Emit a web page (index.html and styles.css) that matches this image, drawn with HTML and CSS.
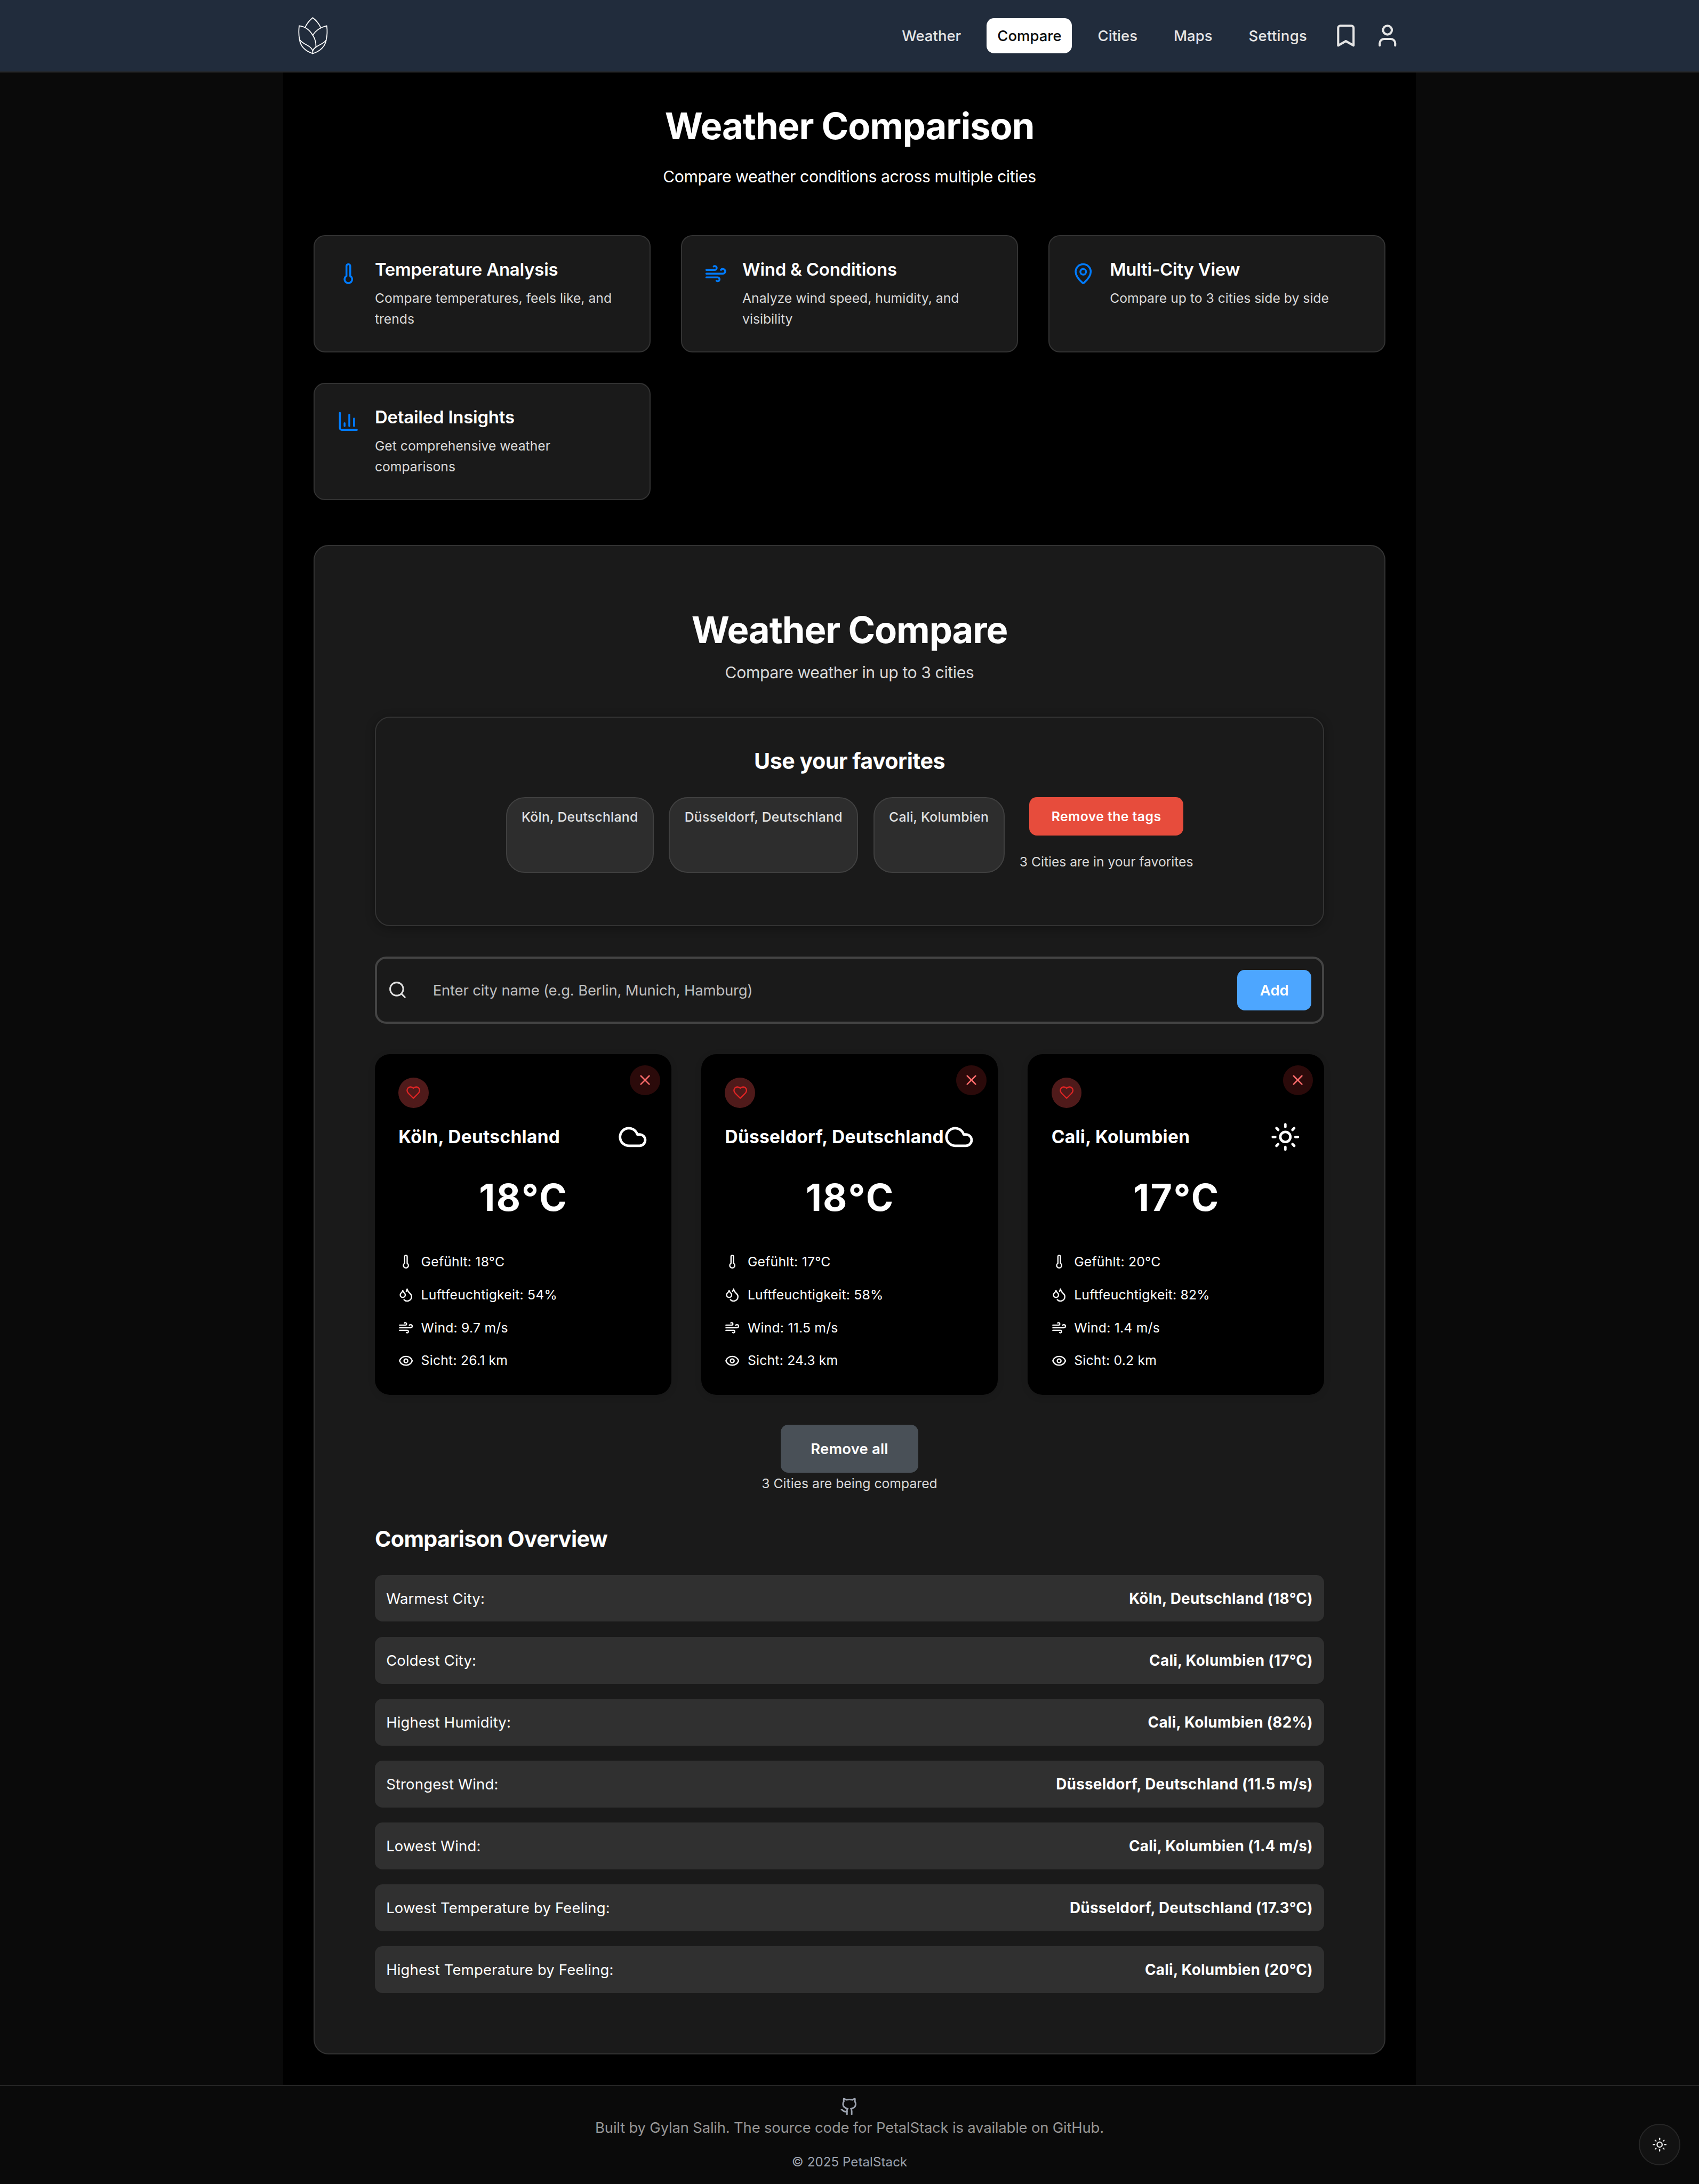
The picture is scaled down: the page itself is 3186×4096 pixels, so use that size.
FILE: index.html
```html
<!DOCTYPE html>
<html lang="en">
<head>
<meta charset="utf-8">
<title>PetalStack – Weather Comparison</title>
<link rel="stylesheet" href="styles.css">
</head>
<body>
<svg class="sprite" aria-hidden="true">
  <symbol id="thermometer" viewBox="0 0 24 24"><path d="M14 4v10.54a4 4 0 1 1-4 0V4a2 2 0 0 1 4 0Z"/></symbol>
  <symbol id="wind" viewBox="0 0 24 24"><path d="M12.8 19.6A2 2 0 1 0 14 16H2"/><path d="M17.5 8a2.5 2.5 0 1 1 2 4H2"/><path d="M9.8 4.4A2 2 0 1 1 11 8H2"/></symbol>
  <symbol id="pin" viewBox="0 0 24 24"><path d="M20 10c0 4.993-5.539 10.193-7.399 11.799a1 1 0 0 1-1.202 0C9.539 20.193 4 14.993 4 10a8 8 0 0 1 16 0"/><circle cx="12" cy="10" r="3"/></symbol>
  <symbol id="chart" viewBox="0 0 24 24"><path d="M3 3v16a2 2 0 0 0 2 2h16"/><path d="M18 17V9"/><path d="M13 17V5"/><path d="M8 17v-3"/></symbol>
  <symbol id="bookmark" viewBox="0 0 24 24"><path d="m19 21-7-4-7 4V5a2 2 0 0 1 2-2h10a2 2 0 0 1 2 2v16z"/></symbol>
  <symbol id="user" viewBox="0 0 24 24"><path d="M19 21v-2a4 4 0 0 0-4-4H9a4 4 0 0 0-4 4v2"/><circle cx="12" cy="7" r="4"/></symbol>
  <symbol id="search" viewBox="0 0 24 24"><circle cx="11" cy="11" r="8"/><path d="m21 21-4.3-4.3"/></symbol>
  <symbol id="heart" viewBox="0 0 24 24"><path d="M19 14c1.49-1.46 3-3.21 3-5.5A5.5 5.5 0 0 0 16.5 3c-1.76 0-3 .5-4.5 2-1.5-1.5-2.74-2-4.5-2A5.5 5.5 0 0 0 2 8.5c0 2.3 1.5 4.05 3 5.5l7 7Z"/></symbol>
  <symbol id="close" viewBox="0 0 24 24"><path d="M18 6 6 18"/><path d="m6 6 12 12"/></symbol>
  <symbol id="cloud" viewBox="0 0 24 24"><path d="M17.5 19H9a7 7 0 1 1 6.71-9h1.79a4.5 4.5 0 1 1 0 9Z"/></symbol>
  <symbol id="sun" viewBox="0 0 24 24"><circle cx="12" cy="12" r="4"/><path d="M12 2v2"/><path d="M12 20v2"/><path d="m4.93 4.93 1.41 1.41"/><path d="m17.66 17.66 1.41 1.41"/><path d="M2 12h2"/><path d="M20 12h2"/><path d="m6.34 17.66-1.41 1.41"/><path d="m19.07 4.93-1.41 1.41"/></symbol>
  <symbol id="droplets" viewBox="0 0 24 24"><path d="M7 16.3c2.2 0 4-1.83 4-4.05 0-1.16-.57-2.26-1.71-3.19S7.29 6.75 7 5.3c-.29 1.45-1.14 2.84-2.29 3.76S3 11.1 3 12.25c0 2.22 1.8 4.05 4 4.05z"/><path d="M12.56 6.6A10.97 10.97 0 0 0 14 3.02c.5 2.5 2 4.9 4 6.5s3 3.5 3 5.5a6.98 6.98 0 0 1-11.91 4.97"/></symbol>
  <symbol id="eye" viewBox="0 0 24 24"><path d="M2.062 12.348a1 1 0 0 1 0-.696 10.75 10.75 0 0 1 19.876 0 1 1 0 0 1 0 .696 10.75 10.75 0 0 1-19.876 0"/><circle cx="12" cy="12" r="3"/></symbol>
  <symbol id="github" viewBox="0 0 24 24"><path d="M15 22v-4a4.8 4.8 0 0 0-1-3.5c3 0 6-2 6-5.5.08-1.25-.27-2.48-1-3.5.28-1.15.28-2.35 0-3.5 0 0-1 0-3 1.5-2.64-.5-5.36-.5-8 0C6 2 5 2 5 2c-.3 1.15-.3 2.35 0 3.5A5.403 5.403 0 0 0 4 9c0 3.5 3 5.5 6 5.5-.39.49-.68 1.05-.85 1.65-.17.6-.22 1.23-.15 1.85v4"/><path d="M9 18c-4.51 2-5-2-7-2"/></symbol>
</svg>

<header class="header">
  <div class="header-inner">
    <svg class="logo" viewBox="48 36 192 252">
      <path d="M93 108Q107 75 141 47Q175 73 191 108"/>
      <path d="M57 185Q49 145 55 98Q110 105 141 158Q164 193 161 234"/>
      <path d="M141 158Q170 112 230 98Q237 147 226 190"/>
      <path d="M57 185C62 227 92 258 141 275C190 260 221 227 226 190"/>
      <path d="M57 185C78 219 132 222 141 258C151 226 205 219 226 190"/>
      <path d="M141 258V275"/>
    </svg>
    <nav class="nav">
      <a class="nav-link">Weather</a>
      <a class="nav-link active">Compare</a>
      <a class="nav-link">Cities</a>
      <a class="nav-link">Maps</a>
      <a class="nav-link">Settings</a>
      <svg class="icon nav-icon"><use href="#bookmark"/></svg>
      <svg class="icon nav-icon"><use href="#user"/></svg>
    </nav>
  </div>
</header>

<main class="main">
  <h1 class="title">Weather Comparison</h1>
  <p class="subtitle page-subtitle">Compare weather conditions across multiple cities</p>

  <section class="features">
    <article class="feature">
      <svg class="icon feature-icon"><use href="#thermometer"/></svg>
      <div><h3 class="feature-title">Temperature Analysis</h3><p class="feature-text">Compare temperatures, feels like, and trends</p></div>
    </article>
    <article class="feature">
      <svg class="icon feature-icon"><use href="#wind"/></svg>
      <div><h3 class="feature-title">Wind &amp; Conditions</h3><p class="feature-text">Analyze wind speed, humidity, and visibility</p></div>
    </article>
    <article class="feature">
      <svg class="icon feature-icon"><use href="#pin"/></svg>
      <div><h3 class="feature-title">Multi-City View</h3><p class="feature-text">Compare up to 3 cities side by side</p></div>
    </article>
    <article class="feature">
      <svg class="icon feature-icon"><use href="#chart"/></svg>
      <div><h3 class="feature-title">Detailed Insights</h3><p class="feature-text">Get comprehensive weather comparisons</p></div>
    </article>
  </section>

  <section class="panel">
    <h2 class="title">Weather Compare</h2>
    <p class="subtitle panel-subtitle">Compare weather in up to 3 cities</p>

    <div class="favorites">
      <h3 class="favorites-title">Use your favorites</h3>
      <div class="tags">
        <span class="tag">Köln, Deutschland</span>
        <span class="tag">Düsseldorf, Deutschland</span>
        <span class="tag">Cali, Kolumbien</span>
        <div class="tags-side">
          <button class="btn btn-danger">Remove the tags</button>
          <p class="note">3 Cities are in your favorites</p>
        </div>
      </div>
    </div>

    <div class="search">
      <svg class="icon search-icon"><use href="#search"/></svg>
      <span class="placeholder">Enter city name (e.g. Berlin, Munich, Hamburg)</span>
      <button class="btn btn-add">Add</button>
    </div>

    <div class="cities">
      <article class="city">
        <button class="round close"><svg class="icon"><use href="#close"/></svg></button>
        <button class="round heart"><svg class="icon"><use href="#heart"/></svg></button>
        <div class="city-head"><h3 class="city-name">Köln, Deutschland</h3><svg class="icon city-icon"><use href="#cloud"/></svg></div>
        <div class="temp">18°C</div>
        <ul class="details">
          <li><svg class="icon"><use href="#thermometer"/></svg>Gefühlt: 18°C</li>
          <li><svg class="icon"><use href="#droplets"/></svg>Luftfeuchtigkeit: 54%</li>
          <li><svg class="icon"><use href="#wind"/></svg>Wind: 9.7 m/s</li>
          <li><svg class="icon"><use href="#eye"/></svg>Sicht: 26.1 km</li>
        </ul>
      </article>
      <article class="city">
        <button class="round close"><svg class="icon"><use href="#close"/></svg></button>
        <button class="round heart"><svg class="icon"><use href="#heart"/></svg></button>
        <div class="city-head"><h3 class="city-name">Düsseldorf, Deutschland</h3><svg class="icon city-icon"><use href="#cloud"/></svg></div>
        <div class="temp">18°C</div>
        <ul class="details">
          <li><svg class="icon"><use href="#thermometer"/></svg>Gefühlt: 17°C</li>
          <li><svg class="icon"><use href="#droplets"/></svg>Luftfeuchtigkeit: 58%</li>
          <li><svg class="icon"><use href="#wind"/></svg>Wind: 11.5 m/s</li>
          <li><svg class="icon"><use href="#eye"/></svg>Sicht: 24.3 km</li>
        </ul>
      </article>
      <article class="city">
        <button class="round close"><svg class="icon"><use href="#close"/></svg></button>
        <button class="round heart"><svg class="icon"><use href="#heart"/></svg></button>
        <div class="city-head"><h3 class="city-name">Cali, Kolumbien</h3><svg class="icon city-icon"><use href="#sun"/></svg></div>
        <div class="temp">17°C</div>
        <ul class="details">
          <li><svg class="icon"><use href="#thermometer"/></svg>Gefühlt: 20°C</li>
          <li><svg class="icon"><use href="#droplets"/></svg>Luftfeuchtigkeit: 82%</li>
          <li><svg class="icon"><use href="#wind"/></svg>Wind: 1.4 m/s</li>
          <li><svg class="icon"><use href="#eye"/></svg>Sicht: 0.2 km</li>
        </ul>
      </article>
    </div>

    <div class="actions">
      <button class="btn btn-clear">Remove all</button>
      <p class="note">3 Cities are being compared</p>
    </div>

    <h3 class="overview-title">Comparison Overview</h3>
    <dl class="overview">
      <div class="row"><dt>Warmest City:</dt><dd>Köln, Deutschland (18°C)</dd></div>
      <div class="row"><dt>Coldest City:</dt><dd>Cali, Kolumbien (17°C)</dd></div>
      <div class="row"><dt>Highest Humidity:</dt><dd>Cali, Kolumbien (82%)</dd></div>
      <div class="row"><dt>Strongest Wind:</dt><dd>Düsseldorf, Deutschland (11.5 m/s)</dd></div>
      <div class="row"><dt>Lowest Wind:</dt><dd>Cali, Kolumbien (1.4 m/s)</dd></div>
      <div class="row"><dt>Lowest Temperature by Feeling:</dt><dd>Düsseldorf, Deutschland (17.3°C)</dd></div>
      <div class="row"><dt>Highest Temperature by Feeling:</dt><dd>Cali, Kolumbien (20°C)</dd></div>
    </dl>
  </section>
</main>

<footer class="footer">
  <svg class="icon footer-icon"><use href="#github"/></svg>
  <p class="credit">Built by Gylan Salih. The source code for PetalStack is available on GitHub.</p>
  <p class="copyright">© 2025 PetalStack</p>
</footer>

<button class="round theme-toggle"><svg class="icon"><use href="#sun"/></svg></button>
</body>
</html>
```
FILE: styles.css
```css
html {
  font-size: 28.32px;
}

* {
  box-sizing: border-box;
  margin: 0;
  padding: 0;
}

body {
  display: flex;
  flex-direction: column;
  min-height: 100vh;
  overflow: hidden;
  background: #0a0a0a;
  color: #fff;
  font-family: Inter, "Liberation Sans", sans-serif;
  font-size: .97rem;
}

ul, dl {
  list-style: none;
}

button {
  border: 0;
  color: inherit;
  font: inherit;
}

.sprite {
  position: absolute;
  width: 0;
  height: 0;
}

.icon {
  display: block;
  flex: none;
  width: 1rem;
  height: 1rem;
  fill: none;
  stroke: currentColor;
  stroke-width: 2;
  stroke-linecap: round;
  stroke-linejoin: round;
}

/* Header */
.header {
  height: 4.8125rem;
  background: #212c3c;
  border-bottom: 2px solid #262626;
}

.header-inner {
  display: flex;
  align-items: center;
  justify-content: space-between;
  width: 75rem;
  height: 100%;
  margin: 0 auto;
  padding: 0 1rem;
}

.logo {
  width: 2rem;
  height: 2.625rem;
  fill: none;
  stroke: #fff;
  stroke-width: 6;
  stroke-linecap: round;
  stroke-linejoin: round;
}

.nav {
  display: flex;
  align-items: center;
  gap: 1rem;
  color: #e5e5e5;
}

.nav-link {
  display: flex;
  align-items: center;
  height: 2.3125rem;
  padding: 0 .7rem;
  border-radius: .5rem;
  font-weight: 500;
  letter-spacing: .001em;
}

.nav-link:last-of-type {
  letter-spacing: .012em;
}

.nav-link.active {
  background: #fff;
  color: #0a0a0a;
}

.nav-icon {
  width: 1.75rem;
  height: 1.75rem;
}

/* Page */
.main {
  width: 75rem;
  margin: 0 auto;
  padding: 2rem;
  background: #000;
}

.title {
  font-size: 2.425rem;
  font-weight: 700;
  line-height: 3.1rem;
  letter-spacing: -.0158em;
  text-align: center;
}

.subtitle {
  font-size: 1.067rem;
  line-height: 1.76rem;
  letter-spacing: -.014em;
  text-align: center;
}

.page-subtitle {
  margin: .93rem 0 2.96rem;
}

.features {
  display: grid;
  grid-template-columns: repeat(3, 1fr);
  gap: 2rem;
  margin-bottom: 2.98rem;
}

.feature {
  display: flex;
  gap: 1rem;
  height: 7.78rem;
  padding: 1.5rem;
  background: #1a1a1a;
  border: 2px solid #333;
  border-radius: .75rem;
}

.feature-icon {
  width: 1.5rem;
  height: 1.5rem;
  margin-top: .25rem;
  color: #007bff;
}

.feature-title {
  margin-bottom: .47rem;
  font-size: 1.164rem;
  font-weight: 600;
  line-height: 1.47rem;
  letter-spacing: -.007em;
}

.feature-text {
  color: #d9d9d9;
  font-size: .873rem;
  line-height: 1.36rem;
}

.panel {
  padding: 4rem;
  background: #1a1a1a;
  border: 2px solid #333;
  border-radius: 1rem;
}

.panel-subtitle {
  margin: .41rem 0 2rem;
  color: #d9d9d9;
}

.note {
  color: #d9d9d9;
  font-size: .873rem;
  line-height: 1.44rem;
  white-space: nowrap;
}

.btn {
  border-radius: .5rem;
  font-weight: 600;
}

/* Favorites */
.favorites {
  margin-bottom: 2rem;
  padding: 1.5rem 1.5rem 3.49rem;
  border: 2px solid #333;
  border-radius: 1rem;
  box-shadow: 0 .125rem .625rem rgba(0, 0, 0, .3);
}

.favorites-title {
  margin-bottom: .98rem;
  font-size: 1.455rem;
  font-weight: 700;
  line-height: 2.8rem;
  letter-spacing: -.013em;
  text-align: center;
}

.tags {
  display: flex;
  justify-content: center;
  gap: 1rem;
  height: 5rem;
}

.tag {
  padding: .52rem .97rem 0;
  background: #2d2d2d;
  border: 2px solid #404040;
  border-radius: 1.25rem;
  color: #e0e0e0;
  font-size: .873rem;
  font-weight: 500;
  line-height: 1.44rem;
  letter-spacing: .01em;
}

.tags-side {
  display: flex;
  flex-direction: column;
  align-items: center;
  gap: 1.03rem;
}

.tags-side .note {
  letter-spacing: -.002em;
}

.btn-danger {
  width: 10.19rem;
  height: 2.5625rem;
  background: #e74c3c;
  font-size: .873rem;
  letter-spacing: .0178em;
}

/* Search */
.search {
  display: flex;
  align-items: center;
  height: 4.4375rem;
  margin-bottom: 2.01rem;
  padding: 0 .7rem;
  border: 4px solid #444;
  border-radius: .75rem;
}

.search-icon {
  width: 1.3rem;
  height: 1.3rem;
  color: #e0e0e0;
}

.placeholder {
  flex: 1;
  margin-left: 1.7rem;
  color: #bfbfbf;
  letter-spacing: -.006em;
}

.btn-add {
  width: 4.91rem;
  height: 2.675rem;
  background: #4da6ff;
}

/* City cards */
.cities {
  display: grid;
  grid-template-columns: repeat(3, 1fr);
  gap: 2rem;
  margin-bottom: 2rem;
}

.city {
  position: relative;
  height: 22.56rem;
  padding: 1.5625rem;
  background: #000;
  border-radius: 1rem;
  box-shadow: 0 .125rem .5rem rgba(0, 0, 0, .1);
}

.round {
  display: flex;
  align-items: center;
  justify-content: center;
  width: 2rem;
  height: 2rem;
  border-radius: 50%;
}

.heart {
  background: #4f1a1a;
  color: #e02424;
}

.close {
  position: absolute;
  top: .74rem;
  right: .74rem;
  background: #2b0a0a;
  color: #ff6b6b;
}

.close .icon {
  width: 1.1rem;
  height: 1.1rem;
}

.city-head {
  display: flex;
  align-items: center;
  justify-content: space-between;
  height: 2rem;
  margin-top: .94rem;
}

.city-name {
  font-size: 1.182rem;
  font-weight: 700;
  letter-spacing: .009em;
  white-space: nowrap;
}

.city-icon {
  width: 2rem;
  height: 2rem;
}

.temp {
  margin: 1.79rem 0 2.24rem;
  padding-left: .08rem;
  font-size: 2.46rem;
  font-weight: 700;
  line-height: 2.5rem;
  letter-spacing: .035em;
  text-align: center;
}

.details {
  display: flex;
  flex-direction: column;
  gap: .75rem;
  font-size: .873rem;
  line-height: 1.4375rem;
  letter-spacing: .009em;
}

.details li {
  display: flex;
  align-items: center;
  gap: .5rem;
}

/* Actions */
.actions {
  display: flex;
  flex-direction: column;
  align-items: center;
  margin-bottom: 1.74rem;
}

.btn-clear {
  width: 9.125rem;
  height: 3.19rem;
  background: #495057;
  letter-spacing: .006em;
}

/* Overview */
.overview-title {
  margin-bottom: 1.17rem;
  font-size: 1.455rem;
  font-weight: 700;
  line-height: 2.4rem;
  letter-spacing: -.0149em;
}

.overview {
  display: flex;
  flex-direction: column;
  gap: 1rem;
}

.row {
  display: flex;
  align-items: center;
  justify-content: space-between;
  height: 3.1rem;
  padding: 0 .75rem;
  background: #303030;
  border-radius: .5rem;
  letter-spacing: .006em;
}

.row dd {
  font-size: .985rem;
  font-weight: 700;
  letter-spacing: .009em;
}

/* Footer */
.footer {
  display: flex;
  flex: 1;
  flex-direction: column;
  align-items: center;
  padding-top: .74rem;
  border-top: 2px solid #262626;
}

.footer-icon {
  width: 1.25rem;
  height: 1.25rem;
  color: #9ca3af;
}

.credit {
  margin-bottom: .77rem;
  color: #969696;
  line-height: 1.6rem;
  letter-spacing: -.0073em;
}

.copyright {
  color: #9ca3af;
  font-size: .849rem;
  line-height: 1.4rem;
  letter-spacing: .004em;
}

.theme-toggle {
  position: fixed;
  right: 1.25rem;
  bottom: 1.25rem;
  width: 2.75rem;
  height: 2.75rem;
  background: #121212;
  border: 2px solid #262626;
  color: #e5e5e5;
}
```
